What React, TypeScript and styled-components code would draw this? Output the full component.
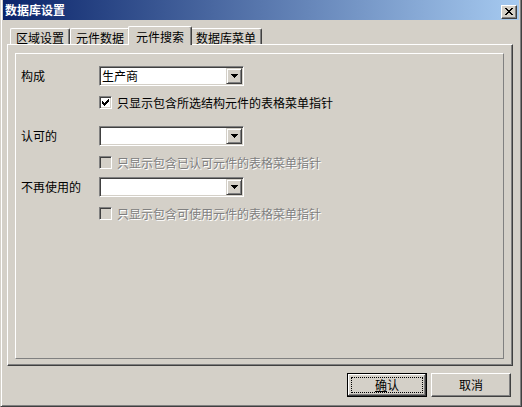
import React from "react";
import styled, { createGlobalStyle } from "styled-components";

const FACE = "#D4D0C8";
const SHADOW = "#808080";
const DARK = "#404040";

const GlobalStyle = createGlobalStyle`
  html, body { margin: 0; padding: 0; background: ${FACE}; }
  body {
    font-family: "Noto Sans CJK SC", "Noto Sans", sans-serif;
    font-size: 12px;
    color: #000;
  }
  * { box-sizing: border-box; }
`;

const Window = styled.div`
  width: 522px;
  height: 407px;
  background: ${FACE};
  border: 1px solid;
  border-top: none;
  border-color: ${FACE} ${DARK} ${DARK} ${FACE};
  box-shadow: inset 1px 0 #fff, inset -1px -1px ${SHADOW};
  padding: 0 2px;
  display: flex;
  flex-direction: column;
`;

const TitleBar = styled.div`
  height: 20px;
  flex: none;
  display: flex;
  align-items: flex-start;
  padding: 0 2px 0 2px;
  background: linear-gradient(to right, #0a246a, #a6caf0);
`;

const TitleText = styled.div`
  flex: 1;
  margin-top: 4px;
  color: #fff;
  font-weight: 700;
  line-height: 12px;
  white-space: nowrap;
`;

const CaptionButton = styled.div`
  width: 16px;
  height: 14px;
  margin-top: 5px;
  background: ${FACE};
  border: 1px solid;
  border-color: #fff ${DARK} ${DARK} #fff;
  box-shadow: inset -1px -1px ${SHADOW};
  display: flex;
  align-items: center;
  justify-content: center;
  padding-bottom: 1px;
`;

const Body = styled.div`
  flex: 1;
  display: flex;
  flex-direction: column;
  padding: 0 6px 0 4px;
`;

const TabStrip = styled.div`
  margin-top: 6px;
  height: 18px;
  flex: none;
  display: flex;
  align-items: flex-end;
  padding-left: 3px;
`;

const Tab = styled.div<{ $active?: boolean }>`
  height: ${(p) => (p.$active ? 19 : 16)}px;
  padding: ${(p) => (p.$active ? "4px 7px 0" : "3px 5px 0")};
  margin: 0 ${(p) => (p.$active ? -2 : 0)}px ${(p) => (p.$active ? -1 : 0)}px;
  background: ${FACE};
  border-left: 1px solid #fff;
  border-top: 1px solid #fff;
  border-right: 1px solid ${DARK};
  box-shadow: inset -1px 0 ${SHADOW};
  border-radius: 2px 2px 0 0;
  line-height: 12px;
  white-space: nowrap;
  position: ${(p) => (p.$active ? "relative" : "static")};
  z-index: ${(p) => (p.$active ? 1 : "auto")};
`;

const Panel = styled.div`
  height: 322px;
  flex: none;
  display: flex;
  border: 1px solid;
  border-color: #fff ${DARK} ${DARK} #fff;
  box-shadow: inset -1px -1px ${SHADOW};
  padding: 8px 8px 6px 7px;
`;

const GroupBox = styled.div`
  flex: 1;
  border: 1px solid;
  border-color: #fff ${SHADOW} ${SHADOW} #fff;
  padding: 12px 0 0 5px;
  display: flex;
  flex-direction: column;
`;

const FieldRow = styled.div<{ $gap: number }>`
  display: flex;
  align-items: center;
  height: 20px;
  margin-top: ${(p) => p.$gap}px;
`;

const FieldLabel = styled.div`
  width: 78px;
  line-height: 12px;
  white-space: nowrap;
`;

const ComboBox = styled.div`
  width: 145px;
  height: 20px;
  display: flex;
  background: #fff;
  border: 1px solid;
  border-color: ${SHADOW} #fff #fff ${SHADOW};
  box-shadow: inset 1px 1px ${DARK}, inset -1px -1px ${FACE};
  padding: 1px;
`;

const ComboText = styled.div`
  flex: 1;
  padding-left: 1px;
  line-height: 12px;
  display: flex;
  align-items: center;
  white-space: nowrap;
`;

const DropButton = styled.div`
  width: 16px;
  height: 16px;
  background: ${FACE};
  border: 1px solid;
  border-color: ${FACE} ${DARK} ${DARK} ${FACE};
  box-shadow: inset 1px 1px #fff, inset -1px -1px ${SHADOW};
  display: flex;
  align-items: center;
  justify-content: center;
`;

const CheckRow = styled.div`
  display: flex;
  align-items: center;
  gap: 5px;
  height: 13px;
  margin: 10px 0 0 78px;
`;

const CheckBox = styled.div<{ $disabled?: boolean }>`
  width: 13px;
  height: 13px;
  flex: none;
  background: ${(p) => (p.$disabled ? FACE : "#fff")};
  border: 1px solid;
  border-color: ${SHADOW} #fff #fff ${SHADOW};
  box-shadow: inset 1px 1px ${DARK}, inset -1px -1px ${FACE};
  display: flex;
  align-items: center;
  justify-content: center;
`;

const CheckText = styled.div<{ $disabled?: boolean }>`
  line-height: 12px;
  white-space: nowrap;
  color: ${(p) => (p.$disabled ? SHADOW : "#000")};
  text-shadow: ${(p) => (p.$disabled ? "1px 1px #fff" : "none")};
`;

const ButtonRow = styled.div`
  display: flex;
  justify-content: flex-end;
  gap: 4px;
  margin-top: 7px;
  padding-right: 2px;
`;

const Button = styled.div<{ $default?: boolean }>`
  width: 80px;
  height: 24px;
  display: flex;
  background: ${FACE};
  border: 1px solid;
  border-color: ${(p) => (p.$default ? "#000" : `#fff ${DARK} ${DARK} #fff`)};
  box-shadow: ${(p) =>
    p.$default
      ? `inset -1px -1px ${DARK}, inset 1px 1px #fff, inset -2px -2px ${SHADOW}`
      : `inset -1px -1px ${SHADOW}`};
  line-height: 12px;
`;

const ButtonFace = styled.div<{ $focused?: boolean }>`
  flex: 1;
  margin: 3px;
  display: flex;
  align-items: center;
  justify-content: center;
  border: 1px ${(p) => (p.$focused ? "dotted #000" : "solid transparent")};
  white-space: nowrap;
`;

const Glyph = ({ w, h, d }: { w: number; h: number; d: string }) => (
  <svg width={w} height={h} viewBox={`0 0 ${w} ${h}`} shapeRendering="crispEdges">
    <path d={d} fill="#000" />
  </svg>
);

const CLOSE_D =
  "M0 0h2v1H0z M6 0h2v1H6z M1 1h2v1H1z M5 1h2v1H5z M2 2h4v1H2z M3 3h2v1H3z M2 4h4v1H2z M1 5h2v1H1z M5 5h2v1H5z M0 6h2v1H0z M6 6h2v1H6z";
const ARROW_D = "M0 0h7v1H0z M1 1h5v1H1z M2 2h3v1H2z M3 3h1v1H3z";
const CHECK_D =
  "M6 0h1v1H6z M5 1h2v1H5z M0 2h1v1H0z M4 2h3v1H4z M0 3h2v1H0z M3 3h3v1H3z M0 4h5v1H0z M1 5h3v1H1z M2 6h1v1H2z";

type FieldProps = {
  label: string;
  value: string;
  check: string;
  checked?: boolean;
  disabled?: boolean;
  gap: number;
};

const Field = ({ label, value, check, checked, disabled, gap }: FieldProps) => (
  <>
    <FieldRow $gap={gap}>
      <FieldLabel>{label}</FieldLabel>
      <ComboBox>
        <ComboText>{value}</ComboText>
        <DropButton>
          <Glyph w={7} h={4} d={ARROW_D} />
        </DropButton>
      </ComboBox>
    </FieldRow>
    <CheckRow>
      <CheckBox $disabled={disabled}>{checked && <Glyph w={7} h={7} d={CHECK_D} />}</CheckBox>
      <CheckText $disabled={disabled}>{check}</CheckText>
    </CheckRow>
  </>
);

const tabs = ["区域设置", "元件数据", "元件搜索", "数据库菜单"];

export default function App() {
  return (
    <>
      <GlobalStyle />
      <Window>
        <TitleBar>
          <TitleText>数据库设置</TitleText>
          <CaptionButton>
            <Glyph w={8} h={7} d={CLOSE_D} />
          </CaptionButton>
        </TitleBar>
        <Body>
          <TabStrip>
            {tabs.map((t) => (
              <Tab key={t} $active={t === "元件搜索"}>
                {t}
              </Tab>
            ))}
          </TabStrip>
          <Panel>
            <GroupBox>
              <Field
                gap={0}
                label="构成"
                value="生产商"
                checked
                check="只显示包含所选结构元件的表格菜单指针"
              />
              <Field
                gap={17}
                label="认可的"
                value=""
                disabled
                check="只显示包含已认可元件的表格菜单指针"
              />
              <Field
                gap={8}
                label="不再使用的"
                value=""
                disabled
                check="只显示包含可使用元件的表格菜单指针"
              />
            </GroupBox>
          </Panel>
          <ButtonRow>
            <Button $default>
              <ButtonFace $focused>
                <u>确</u>认
              </ButtonFace>
            </Button>
            <Button>
              <ButtonFace>取消</ButtonFace>
            </Button>
          </ButtonRow>
        </Body>
      </Window>
    </>
  );
}
